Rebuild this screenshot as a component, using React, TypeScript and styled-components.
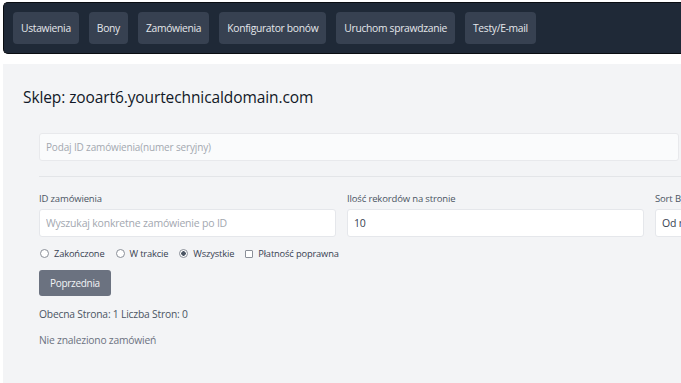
import styled, { createGlobalStyle } from 'styled-components';

const GlobalStyle = createGlobalStyle`
  html, body {
    margin: 0;
    padding: 0;
    background: #ffffff;
    overflow: hidden;
  }
  body {
    font-family: 'Open Sans', 'Noto Sans', sans-serif;
    color: #1f2937;
  }
`;

const tabs = ['Ustawienia', 'Bony', 'Zamówienia', 'Konfigurator bonów', 'Uruchom sprawdzanie', 'Testy/E-mail'];

const filters = [
  { label: 'Zakończone', kind: 'radio', checked: false },
  { label: 'W trakcie', kind: 'radio', checked: false },
  { label: 'Wszystkie', kind: 'radio', checked: true },
  { label: 'Płatność poprawna', kind: 'box', checked: false },
];

export default function App() {
  return (
    <Page>
      <GlobalStyle />
      <Nav>
        {tabs.map((t) => (
          <NavButton key={t}>{t}</NavButton>
        ))}
      </Nav>
      <Main>
        <Title>Sklep: zooart6.yourtechnicaldomain.com</Title>
        <Panel>
          <SerialInput placeholder="Podaj ID zamówienia(numer seryjny)" />
          <Divider />
          <FieldGrid>
            <Field>
              <Label>ID zamówienia</Label>
              <TextInput placeholder="Wyszukaj konkretne zamówienie po ID" />
            </Field>
            <Field>
              <Label>Ilość rekordów na stronie</Label>
              <TextInput defaultValue="10" />
            </Field>
            <Field>
              <Label>Sort By</Label>
              <TextInput defaultValue="Od najnowszych" />
            </Field>
          </FieldGrid>
          <FilterRow>
            {filters.map((f) => (
              <Filter key={f.label}>
                {f.kind === 'radio' ? <Radio $checked={f.checked} /> : <Box />}
                {f.label}
              </Filter>
            ))}
          </FilterRow>
          <PrevButton>Poprzednia</PrevButton>
          <Info>Obecna Strona: 1 Liczba Stron: 0</Info>
          <Empty>Nie znaleziono zamówień</Empty>
        </Panel>
      </Main>
    </Page>
  );
}

const Page = styled.div`
  padding: 2px 0 0 3px;
  height: 381px;
  overflow: hidden;
`;

const Nav = styled.nav`
  display: flex;
  align-items: center;
  gap: 10px;
  height: 50px;
  padding: 0 9px;
  background: #1f2937;
  border: 1.5px solid #0a0d12;
  border-right: none;
  border-radius: 5px 0 0 5px;
`;

const NavButton = styled.button`
  height: 32px;
  padding: 0 8px;
  border: none;
  border-radius: 4px;
  background: #374151;
  color: #e5e7eb;
  font-family: 'Open Sans', sans-serif;
  font-size: 10.3px;
  letter-spacing: -0.3px;
  font-weight: 500;
`;

const Main = styled.main`
  margin-top: 10px;
  background: #f3f4f6;
  padding: 21px 20px 0;
  height: 330px;
  overflow: hidden;
`;

const Title = styled.h2`
  margin: 0 0 24px;
  font-size: 15.5px;
  letter-spacing: -0.1px;
  font-weight: 500;
  color: #111827;
  line-height: 24px;
`;

const Panel = styled.div`
  margin-left: 16px;
  width: 913px;
`;

const SerialInput = styled.input`
  display: block;
  box-sizing: border-box;
  width: 640px;
  height: 28px;
  padding: 0 6px;
  border: 1px solid #e8e9ec;
  border-radius: 3px;
  background: #fafbfc;
  font-family: 'Open Sans', sans-serif;
  font-size: 10px;
  letter-spacing: -0.15px;
  &::placeholder {
    color: #a3a8b0;
  }
`;

const Divider = styled.hr`
  margin: 15px 0 16px;
  border: none;
  border-top: 1px solid #e3e5e8;
`;

const FieldGrid = styled.div`
  display: grid;
  grid-template-columns: repeat(3, 297px);
  column-gap: 11px;
`;

const Field = styled.div`
  display: flex;
  flex-direction: column;
  gap: 4px;
`;

const Label = styled.label`
  font-size: 9.5px;
  letter-spacing: -0.15px;
  font-weight: 500;
  color: #4b5563;
  line-height: 12px;
`;

const TextInput = styled.input`
  box-sizing: border-box;
  height: 28px;
  padding: 0 6px;
  border: 1px solid #e5e7eb;
  border-radius: 3px;
  background: #ffffff;
  font-family: 'Open Sans', sans-serif;
  font-size: 10.5px;
  letter-spacing: -0.2px;
  color: #374151;
  &::placeholder {
    color: #a3a8b0;
  }
`;

const FilterRow = styled.div`
  display: flex;
  gap: 11px;
  margin: 10px 0 10px 1px;
`;

const Filter = styled.span`
  display: flex;
  align-items: center;
  gap: 5px;
  font-size: 9.3px;
  letter-spacing: -0.15px;
  font-weight: 500;
  color: #374151;
`;

const Radio = styled.span<{ $checked: boolean }>`
  box-sizing: border-box;
  width: 9px;
  height: 9px;
  border-radius: 50%;
  border: 1px solid #8a8f98;
  background: ${(p) => (p.$checked ? 'radial-gradient(circle, #4b5563 0 2px, #fff 2.5px)' : '#fff')};
`;

const Box = styled.span`
  box-sizing: border-box;
  width: 8px;
  height: 8px;
  border-radius: 1px;
  border: 1px solid #8a8f98;
  background: #fff;
`;

const PrevButton = styled.button`
  display: block;
  height: 26px;
  padding: 0 11px;
  border: none;
  border-radius: 3px;
  background: #6b7280;
  color: #f3f4f6;
  font-family: 'Open Sans', sans-serif;
  font-size: 10px;
  letter-spacing: -0.3px;
  font-weight: 500;
`;

const Info = styled.p`
  margin: 11px 0 0;
  font-size: 10.3px;
  letter-spacing: -0.2px;
  color: #4b5563;
  line-height: 14px;
`;

const Empty = styled.p`
  margin: 12px 0 0;
  font-size: 10.3px;
  letter-spacing: -0.2px;
  color: #6b7280;
  line-height: 14px;
`;
